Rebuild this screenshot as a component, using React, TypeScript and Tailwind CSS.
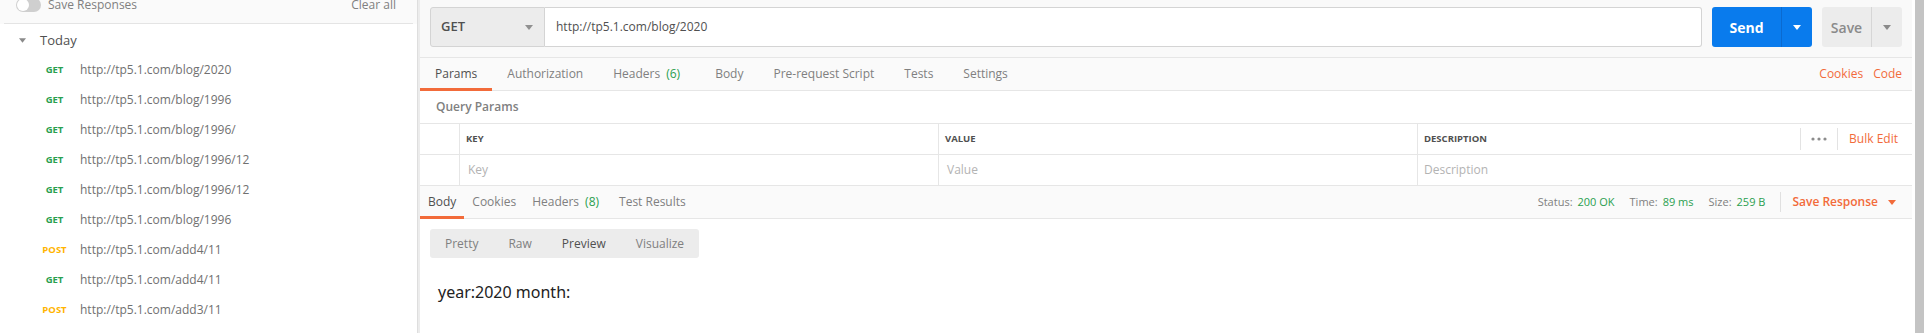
import React from 'react';

const GREEN = 'text-[#2a9f4f]';

const history = [
  { method: 'GET', url: 'http://tp5.1.com/blog/2020' },
  { method: 'GET', url: 'http://tp5.1.com/blog/1996' },
  { method: 'GET', url: 'http://tp5.1.com/blog/1996/' },
  { method: 'GET', url: 'http://tp5.1.com/blog/1996/12' },
  { method: 'GET', url: 'http://tp5.1.com/blog/1996/12' },
  { method: 'GET', url: 'http://tp5.1.com/blog/1996' },
  { method: 'POST', url: 'http://tp5.1.com/add4/11' },
  { method: 'GET', url: 'http://tp5.1.com/add4/11' },
  { method: 'POST', url: 'http://tp5.1.com/add3/11' },
];

const Caret = ({ color = '#808080', className = '' }: { color?: string; className?: string }) => (
  <svg width="8" height="5" viewBox="0 0 8 5" className={className}>
    <path d="M0 0h8L4 5z" fill={color} />
  </svg>
);

const Sidebar = () => (
  <aside className="w-[418px] shrink-0 border-r border-[#dedede] bg-white flex flex-col">
    <div className="bg-[#fafafa]">
      <div className="-mt-[14px] h-[38px] mx-1 border-b border-[#e4e4e4] flex items-center pl-3 pr-[17px] text-[12px] text-[#808080]">
        <div className="w-[25px] h-[14px] rounded-full bg-[#cfcfcf] flex items-center px-[1px]">
          <div className="w-[12px] h-[12px] rounded-full bg-white" />
        </div>
        <span className="ml-[7px]">Save Responses</span>
        <span className="ml-auto">Clear all</span>
      </div>
    </div>
    <div className="h-[31px] pt-[2px] flex items-center pl-[19px] text-[13px] text-[#505050]">
      <Caret color="#8a8a8a" className="w-[7px] h-[5px]" />
      <span className="ml-[14px]">Today</span>
    </div>
    {history.map((h, i) => (
      <div key={i} className="h-[30px] flex items-center pl-[36px] shrink-0">
        <span
          className={`w-[37px] text-center text-[9.5px] font-bold ${
            h.method === 'GET' ? 'text-[#2a9f4f]' : 'text-[#ffb400]'
          }`}
        >
          {h.method}
        </span>
        <span className="ml-[7px] text-[12px] text-[#707070]">{h.url}</span>
      </div>
    ))}
  </aside>
);

const reqTabs = [
  { label: 'Params', active: true },
  { label: 'Authorization' },
  { label: 'Headers', count: '(6)' },
  { label: 'Body' },
  { label: 'Pre-request Script' },
  { label: 'Tests' },
  { label: 'Settings' },
];

const resTabs = [
  { label: 'Body', active: true },
  { label: 'Cookies' },
  { label: 'Headers', count: '(8)' },
  { label: 'Test Results' },
];

const Dots = () => (
  <svg width="16" height="4" viewBox="0 0 16 4">
    <circle cx="2" cy="2" r="1.6" fill="#8c8c8c" />
    <circle cx="8" cy="2" r="1.6" fill="#8c8c8c" />
    <circle cx="14" cy="2" r="1.6" fill="#8c8c8c" />
  </svg>
);

const Main = () => (
  <main className="flex-1 min-w-0 flex flex-col border-l-2 border-[#ececec] bg-white">
    {/* url bar */}
    <div className="bg-[#f9f9f9] pt-[7px] pb-[10px] px-[10px] flex items-stretch h-[57px]">
      <div className="w-[115px] h-[40px] bg-[#ececec] border border-[#d4d4d4] rounded-l-[3px] flex items-center pl-[10px] pr-[11px]">
        <span className="text-[13px] font-semibold text-[#505050]">GET</span>
        <Caret color="#909090" className="ml-auto" />
      </div>
      <div className="flex-1 h-[40px] bg-white border border-l-0 border-[#d4d4d4] rounded-r-[3px] flex items-center pl-[11px] text-[12px] text-[#505050]">
        http://tp5.1.com/blog/2020
      </div>
      <div className="ml-[10px] w-[100px] h-[40px] bg-[#097bed] rounded-[3px] flex">
        <div className="w-[70px] flex items-center justify-center text-[14px] font-bold text-white border-r border-[#0a6ad0]">
          Send
        </div>
        <div className="flex-1 flex items-center justify-center">
          <Caret color="#ffffff" />
        </div>
      </div>
      <div className="ml-[10px] w-[80px] h-[40px] bg-[#ececec] rounded-[3px] flex">
        <div className="w-[50px] flex items-center justify-center text-[14px] font-semibold text-[#8a8a8a] border-r border-[#d6d6d6]">
          Save
        </div>
        <div className="flex-1 flex items-center justify-center">
          <Caret color="#8a8a8a" />
        </div>
      </div>
    </div>

    {/* request tabs */}
    <div className="h-[34px] bg-[#fafafa] border-y border-[#e6e6e6] flex items-stretch text-[12px]">
      {reqTabs.map((t) => (
        <div
          key={t.label}
          className={`relative pl-[15px] flex items-center ${t.count ? 'pr-[20px]' : 'pr-[15px]'} ${
            t.active ? 'text-[#505050]' : 'text-[#808080]'
          }`}
        >
          <span>
            {t.label}
            {t.count && <span className={`ml-[6px] ${GREEN}`}>{t.count}</span>}
          </span>
          {t.active && <div className="absolute left-0 right-0 bottom-[-1px] h-[3px] bg-[#f26b3a]" />}
        </div>
      ))}
      <div className="ml-auto pr-[10px] flex items-center gap-[10px] text-[#f26b3a]">
        <span>Cookies</span>
        <span>Code</span>
      </div>
    </div>

    {/* query params */}
    <div className="h-[32px] flex items-center pl-[16px] text-[12px] font-semibold text-[#808080]">Query Params</div>

    <div className="grid grid-cols-[40px_479px_479px_1fr] border-t border-[#e6e6e6] text-[12px]">
      <div className="h-[31px] border-r border-b border-[#e6e6e6]" />
      <div className="h-[31px] border-r border-b border-[#e6e6e6] flex items-center pl-[6px] text-[9.5px] font-bold text-[#505050]">
        KEY
      </div>
      <div className="h-[31px] border-r border-b border-[#e6e6e6] flex items-center pl-[6px] text-[9.5px] font-bold text-[#505050]">
        VALUE
      </div>
      <div className="h-[31px] border-b border-[#e6e6e6] flex items-center pl-[6px]">
        <span className="text-[9.5px] font-bold text-[#505050]">DESCRIPTION</span>
        <div className="ml-auto flex items-center">
          <div className="h-[22px] w-px bg-[#e3e3e3]" />
          <div className="w-[36px] flex justify-center">
            <Dots />
          </div>
          <div className="h-[22px] w-px bg-[#e3e3e3]" />
          <span className="pl-[11px] pr-[14px] text-[#f26b3a]">Bulk Edit</span>
        </div>
      </div>
      <div className="h-[30px] border-r border-[#e6e6e6]" />
      <div className="h-[30px] border-r border-[#e6e6e6] flex items-center pl-[8px] text-[#b3b3b3]">Key</div>
      <div className="h-[30px] border-r border-[#e6e6e6] flex items-center pl-[8px] text-[#b3b3b3]">Value</div>
      <div className="h-[30px] flex items-center pl-[6px] text-[#b3b3b3]">Description</div>
    </div>

    {/* response bar */}
    <div className="h-[34px] bg-[#fafafa] border-y border-[#e6e6e6] flex items-stretch text-[12px]">
      {resTabs.map((t) => (
        <div
          key={t.label}
          className={`relative pl-[8px] flex items-center ${t.count ? 'pr-[12px]' : 'pr-[8px]'} ${
            t.active ? 'text-[#505050]' : 'text-[#808080]'
          }`}
        >
          <span>
            {t.label}
            {t.count && <span className={`ml-[6px] ${GREEN}`}>{t.count}</span>}
          </span>
          {t.active && <div className="absolute left-0 right-0 bottom-[-1px] h-[3px] bg-[#f26b3a]" />}
        </div>
      ))}
      <div className="ml-auto pr-[16px] flex items-center text-[11px] text-[#808080]">
        <span>Status:</span>
        <span className={`ml-[5px] ${GREEN}`}>200 OK</span>
        <span className="ml-[15px]">Time:</span>
        <span className={`ml-[5px] ${GREEN}`}>89 ms</span>
        <span className="ml-[15px]">Size:</span>
        <span className={`ml-[5px] ${GREEN}`}>259 B</span>
        <div className="ml-[15px] h-[20px] w-px bg-[#e0e0e0]" />
        <span className="ml-[11px] text-[12px] font-semibold text-[#f26b3a]">Save Response</span>
        <Caret color="#f26b3a" className="ml-[10px]" />
      </div>
    </div>

    {/* response body */}
    <div className="pl-[10px] pt-[10px]">
      <div className="inline-flex h-[29px] bg-[#ececec] rounded-[3px] text-[12px] text-[#808080]">
        <span className="px-[15px] flex items-center">Pretty</span>
        <span className="px-[15px] flex items-center">Raw</span>
        <span className="px-[15px] flex items-center text-[#505050]">Preview</span>
        <span className="px-[15px] flex items-center">Visualize</span>
      </div>
    </div>
    <div className="pl-[18px] mt-[23px] text-[16px] leading-[22px] text-[#222] font-['Noto_Sans',sans-serif]">
      year:2020 month:
    </div>
  </main>
);

export default function App() {
  return (
    <div className="w-[1924px] h-[333px] overflow-hidden flex bg-white font-['Open_Sans',sans-serif]">
      <Sidebar />
      <Main />
      <div className="w-[12px] shrink-0 flex bg-white">
        <div className="ml-[3px] flex-1 bg-[#c4c4c4]" />
      </div>
    </div>
  );
}
